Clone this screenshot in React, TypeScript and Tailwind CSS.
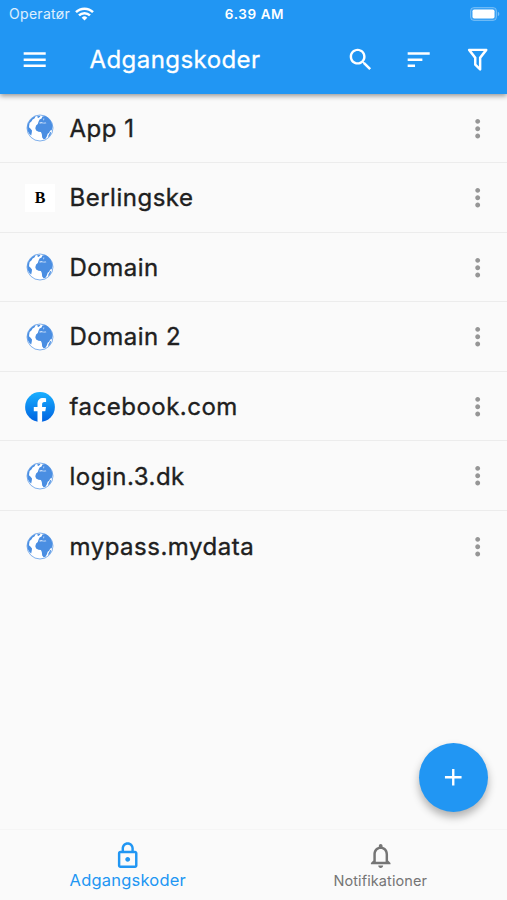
import type { ReactNode } from 'react';

type SiteIcon = 'globe' | 'berlingske' | 'facebook';

interface PasswordEntry {
  name: string;
  icon: SiteIcon;
}

const entries: PasswordEntry[] = [
  { name: 'App 1', icon: 'globe' },
  { name: 'Berlingske', icon: 'berlingske' },
  { name: 'Domain', icon: 'globe' },
  { name: 'Domain 2', icon: 'globe' },
  { name: 'facebook.com', icon: 'facebook' },
  { name: 'login.3.dk', icon: 'globe' },
  { name: 'mypass.mydata', icon: 'globe' },
];

const paths = {
  menu: 'M3 18h18v-2H3v2zm0-5h18v-2H3v2zm0-7v2h18V6H3z',
  search:
    'M15.5 14h-.79l-.28-.27C15.41 12.59 16 11.11 16 9.5 16 5.91 13.09 3 9.5 3S3 5.91 3 9.5 5.91 16 9.5 16c1.61 0 3.09-.59 4.23-1.57l.27.28v.79l5 4.99L20.49 19l-4.99-5zm-6 0C7.01 14 5 11.99 5 9.5S7.01 5 9.5 5 14 7.01 14 9.5 11.99 14 9.5 14z',
  sort: 'M3 18h6v-2H3v2zM3 6v2h18V6H3zm0 7h12v-2H3v2z',
  filter:
    'M15 19.88c.04.3-.06.62-.29.83-.39.39-1.02.39-1.41 0L9.29 16.7a.99.99 0 0 1-.29-.83v-5.12L4.21 4.62a1 1 0 0 1 .17-1.4c.19-.14.4-.22.62-.22h14c.22 0 .43.08.62.22a1 1 0 0 1 .17 1.4L15 10.75v9.13M7.04 5 11 10.06v5.52l2 2v-7.53L16.96 5H7.04z',
  more: 'M12 8c1.1 0 2-.9 2-2s-.9-2-2-2-2 .9-2 2 .9 2 2 2zm0 2c-1.1 0-2 .9-2 2s.9 2 2 2 2-.9 2-2-.9-2-2-2zm0 6c-1.1 0-2 .9-2 2s.9 2 2 2 2-.9 2-2-.9-2-2-2z',
  add: 'M19 13h-6v6h-2v-6H5v-2h6V5h2v6h6v2z',
  lock: 'M18 8h-1V6c0-2.76-2.24-5-5-5S7 3.24 7 6v2H6c-1.1 0-2 .9-2 2v10c0 1.1.9 2 2 2h12c1.1 0 2-.9 2-2V10c0-1.1-.9-2-2-2zM9 6c0-1.66 1.34-3 3-3s3 1.34 3 3v2H9V6zm9 14H6V10h12v10zm-6-3c1.1 0 2-.9 2-2s-.9-2-2-2-2 .9-2 2 .9 2 2 2z',
  bell: 'M12 22c1.1 0 2-.9 2-2h-4c0 1.1.9 2 2 2zm6-6v-5c0-3.07-1.63-5.64-4.5-6.32V4c0-.83-.67-1.5-1.5-1.5s-1.5.67-1.5 1.5v.68C7.64 5.36 6 7.92 6 11v5l-2 2v1h16v-1l-2-2zm-2 1H8v-6c0-2.48 1.51-4.5 4-4.5s4 2.02 4 4.5v6z',
};

function Icon({ name, className = 'size-[29.4px]' }: { name: keyof typeof paths; className?: string }) {
  return (
    <svg viewBox="0 0 24 24" fill="currentColor" className={`shrink-0 ${className}`}>
      <path d={paths[name]} />
    </svg>
  );
}

function Globe() {
  return (
    <svg viewBox="0 0 28 28" className="size-7">
      <circle cx="14" cy="14" r="13" fill="#fff" stroke="#7fb0ec" strokeWidth="1" />
      <g fill="#4a8ee2">
        {/* Americas */}
        <path d="M1.2 13.5C1.5 8.5 4.6 4 9.8 2L8.4 4.4 6.6 5.6 5.4 7.4 3.6 9 3.2 11.5 3 13.2 4.6 14.8 6 16.4 5.8 18.6 5.2 21.6C2.7 19.7 1.2 16.5 1.2 13.5z" />
        {/* Europe, Asia and Africa */}
        <path d="M12.6 7.4l1-2 2-1 .8-2 2.700-.4c4.300 1.700 7.300 6 7.400 11l-.8 3.200-1.500.2-1 2.300-1.500 1-.9 2.800-1.500 2.400-1.700.3-1.400-1.700-.4-3.500-.9-2.100-2.400-.2-2.400-1.200-.8-2.300.8-2.600 1.700-1.500z" />
        <path d="M10.8 2.700l2.500-.9 1.200.6-2.200 1.500zM24.200 18.200l.9-.4-.5 2.900-2.500 2.900.3-2z" />
      </g>
      {/* Mediterranean and inland seas */}
      <path
        d="M12.8 9l2.300-1 2.200.8 2.500-.3.6.7-2 .3-2.600-.3-1.600.2zM17.300 4.800l.8-.6.200 1-.9 1.500z"
        fill="#d5e5fa"
      />
    </svg>
  );
}

function FacebookLogo() {
  return (
    <svg viewBox="0 0 30 30" className="size-[30px]">
      <defs>
        <linearGradient id="facebook" x1="0" y1="0" x2="0" y2="1">
          <stop offset="0" stopColor="#18afff" />
          <stop offset="1" stopColor="#0062e0" />
        </linearGradient>
      </defs>
      <circle cx="15" cy="15" r="14.9" fill="url(#facebook)" />
      <path
        d="M12.5 29.8V19.3H8.8V15h3.700v-3.200c0-3.800 2.200-5.800 5.600-5.800 1.600 0 3 .3 3 .3v3.600h-1.700c-1.800 0-2.300 1.100-2.300 2.200V15H21l-.7 4.300h-3.200v10.500a15 15 0 0 1-4.600 0z"
        fill="#fff"
      />
    </svg>
  );
}

function EntryIcon({ icon }: { icon: SiteIcon }) {
  if (icon === 'facebook') return <FacebookLogo />;
  if (icon === 'berlingske') {
    return (
      <span className="flex h-[28px] w-[30px] items-center justify-center bg-white font-['Liberation_Serif',serif] text-[16px] font-bold text-black">
        B
      </span>
    );
  }
  return <Globe />;
}

function IconButton({ label, children }: { label: string; children: ReactNode }) {
  return (
    <button type="button" aria-label={label} className="flex items-center justify-center">
      {children}
    </button>
  );
}

export default function App() {
  return (
    <div className="flex h-[900px] w-[507px] flex-col overflow-hidden bg-[#fafafa] font-['Inter',sans-serif] text-[#202020]">
      <header className="z-10 h-[94px] shrink-0 bg-[#2196f3] text-white shadow-[0_2px_5px_rgba(0,0,0,0.4)]">
        {/* Status bar */}
        <div className="flex h-[26px] items-center pt-px pr-[7px] pl-[9px]">
          <div className="flex flex-1 items-center gap-[5px] text-[14px] text-white/85">
            <span className="tracking-[0.3px]">Operatør</span>
            <svg viewBox="0 0 19 14" className="h-[14px] w-[19px]" fill="none" stroke="#fff" strokeWidth="2.5">
              <path d="M1 5.2a12 12 0 0 1 17 0M4 8.4a7.8 7.8 0 0 1 11 0" />
              <path d="M9.5 13.5 6.7 10.7a4 4 0 0 1 5.6 0z" fill="#fff" stroke="none" />
            </svg>
          </div>
          <span className="pt-px text-center text-[13.5px] font-semibold tracking-[0.6px]">6.39 AM</span>
          <div className="flex flex-1 justify-end">
            <svg viewBox="0 0 31 14" className="h-[14px] w-[31px]">
              <rect x="1.5" y="0.5" width="26" height="13" rx="3.5" fill="#fff" fillOpacity="0.12" stroke="#fff" strokeOpacity="0.3" />
              <rect x="3.5" y="2.5" width="22" height="9" rx="1.8" fill="#fff" />
              <path d="M28.8 4.8c2 .7 2 3.700 0 4.400z" fill="#fff" fillOpacity="0.4" />
            </svg>
          </div>
        </div>
        <div className="flex h-[67.4px] items-center pr-[14.5px] pl-[20px]">
          <IconButton label="Menu">
            <Icon name="menu" />
          </IconButton>
          <h1 className="ml-[40px] flex-1 text-[24px] tracking-[0.45px] [-webkit-text-stroke:0.3px]">Adgangskoder</h1>
          <div className="flex gap-[29.4px]">
            <IconButton label="Søg">
              <Icon name="search" />
            </IconButton>
            <IconButton label="Sorter">
              <Icon name="sort" />
            </IconButton>
            <IconButton label="Filter">
              <Icon name="filter" />
            </IconButton>
          </div>
        </div>
      </header>

      <main className="-mt-[0.6px] flex-1">
        <ul>
          {entries.map((entry, index) => (
            <li
              key={entry.name}
              className={`flex h-[69.6px] items-center border-[#ececec] pt-px pr-[15px] pl-[25px] ${
                index < entries.length - 1 ? 'border-b' : ''
              }`}
            >
              <span className="flex w-[30px] shrink-0 justify-center">
                <EntryIcon icon={entry.icon} />
              </span>
              <span className="ml-[14.5px] flex-1 pt-px text-[24px] tracking-[0.5px] [-webkit-text-stroke:0.35px]">
                {entry.name}
              </span>
              <IconButton label="Mere">
                <Icon name="more" className="size-[29.4px] text-[#969696]" />
              </IconButton>
            </li>
          ))}
        </ul>
      </main>

      <button
        type="button"
        aria-label="Tilføj"
        className="mr-[19.5px] mb-[17px] flex size-[68.6px] shrink-0 items-center justify-center self-end rounded-full bg-[#2196f3] text-white shadow-[0_5px_9px_rgba(0,0,0,0.3)]"
      >
        <Icon name="add" className="size-[28.5px]" />
      </button>

      <nav className="grid h-[71px] shrink-0 grid-cols-2 border-t border-[#f5f5f5]">
        <div className="flex flex-col items-center pt-[11px] pl-[2px] text-[#2196f3]">
          <Icon name="lock" />
          <span className="-mt-px text-[16.5px] leading-[22px] tracking-[0.2px]">Adgangskoder</span>
        </div>
        <div className="flex flex-col items-center pt-[11px] text-[#757575]">
          <Icon name="bell" />
          <span className="text-[14.5px] leading-[22px] tracking-[0.1px]">Notifikationer</span>
        </div>
      </nav>
    </div>
  );
}
